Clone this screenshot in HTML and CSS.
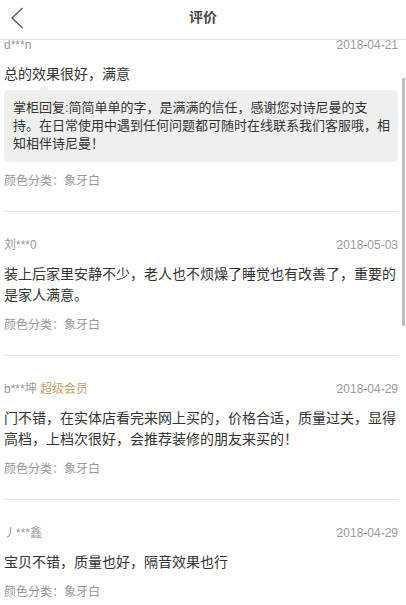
FILE: index.html
```html
<!DOCTYPE html>
<html lang="zh-CN">
<head>
<meta charset="utf-8">
<title>评价</title>
<link rel="stylesheet" href="styles.css">
</head>
<body>
<div class="app">
  <header class="topbar">
    <button class="back" aria-label="返回">
      <svg width="14" height="24" viewBox="0 0 14 24"><path d="M12.5 2 L2 12 L12.5 22" fill="none" stroke="#555" stroke-width="1.3"/></svg>
    </button>
    <h1 class="title">评价</h1>
  </header>
  <main class="viewport">
    <ul class="reviews">
      <li class="review">
        <div class="meta"><span class="user">d***n</span><span class="date">2018-04-21</span></div>
        <p class="text">总的效果很好，满意</p>
        <div class="reply">掌柜回复:简简单单的字，是满满的信任，感谢您对诗尼曼的支持。在日常使用中遇到任何问题都可随时在线联系我们客服哦，相知相伴诗尼曼！</div>
        <p class="sku">颜色分类：象牙白</p>
      </li>
      <li class="review">
        <div class="meta"><span class="user">刘***0</span><span class="date">2018-05-03</span></div>
        <p class="text">装上后家里安静不少，老人也不烦燥了睡觉也有改善了，重要的是家人满意。</p>
        <p class="sku">颜色分类：象牙白</p>
      </li>
      <li class="review">
        <div class="meta"><span class="user">b***坤 <span class="vip">超级会员</span></span><span class="date">2018-04-29</span></div>
        <p class="text">门不错，在实体店看完来网上买的，价格合适，质量过关，显得高档，上档次很好，会推荐装修的朋友来买的！</p>
        <p class="sku">颜色分类：象牙白</p>
      </li>
      <li class="review">
        <div class="meta"><span class="user">丿***鑫</span><span class="date">2018-04-29</span></div>
        <p class="text">宝贝不错，质量也好，隔音效果也行</p>
        <p class="sku">颜色分类：象牙白</p>
      </li>
    </ul>
  </main>
  <div class="scrollbar"></div>
</div>
</body>
</html>
```
FILE: styles.css
```css
* { box-sizing: border-box; }
html, body { margin: 0; padding: 0; background: #fff; }
body {
  font-family: "Liberation Sans", "Noto Sans CJK SC", sans-serif;
  color: #333;
}
.app {
  position: relative;
  width: 406px;
  height: 605px;
  overflow: hidden;
  display: flex;
  flex-direction: column;
}
.topbar {
  position: relative;
  height: 40px;
  flex: none;
  border-bottom: 1px solid #e3e3e3;
  display: flex;
  align-items: flex-start;
  justify-content: center;
  background: #fff;
}
.back {
  position: absolute;
  left: 10px;
  top: 6px;
  border: 0;
  padding: 0;
  background: none;
  width: 14px;
  height: 24px;
}
.back svg { display: block; }
.title {
  margin: 0;
  font-size: 14px;
  font-weight: bold;
  line-height: 35px;
  color: #444;
}
.viewport {
  flex: 1;
  overflow: hidden;
}
.reviews {
  list-style: none;
  margin: -28px 8px 0 4px;
  padding: 0;
}
.review {
  padding: 24px 0 21px;
}
.review + .review { border-top: 1px solid #e6e6e6; }
.meta {
  display: flex;
  justify-content: space-between;
  font-size: 12px;
  line-height: 18px;
  color: #999;
}
.vip { color: #c79f63; }
.text {
  margin: 10px 0 0;
  font-size: 14px;
  line-height: 21px;
  color: #333;
}
.reply {
  position: relative;
  margin-top: 5px;
  background: #efefef;
  border-radius: 5px;
  padding: 9px 5px 9px 9px;
  font-size: 13px;
  line-height: 18px;
  color: #333;
}
.reply::before {
  content: "";
  position: absolute;
  left: 35px;
  top: -5px;
  border-left: 5px solid transparent;
  border-right: 5px solid transparent;
  border-bottom: 5px solid #efefef;
}
.sku {
  margin: 10px 0 0;
  font-size: 12px;
  line-height: 18px;
  color: #999;
}
.scrollbar {
  position: absolute;
  right: 1px;
  top: 78px;
  width: 3px;
  height: 248px;
  background: #bdbdbd;
  border-radius: 1px;
}
```
